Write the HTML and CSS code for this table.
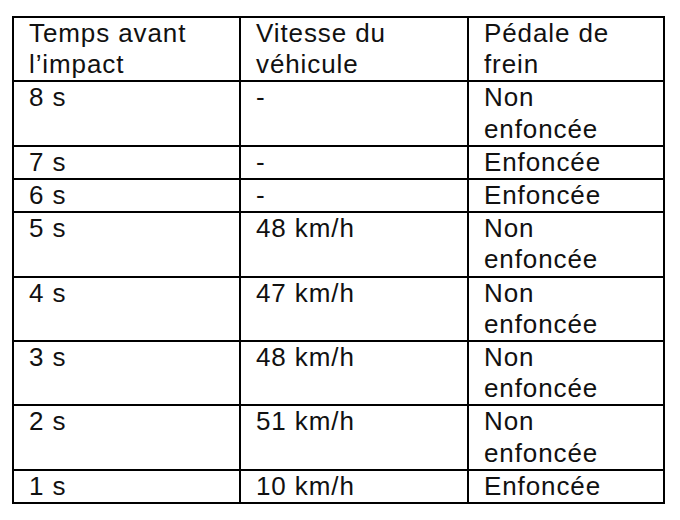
FILE: index.html
```html
<!DOCTYPE html>
<html lang="fr">
<head>
<meta charset="utf-8">
<title>Tableau</title>
<link rel="stylesheet" href="styles.css">
</head>
<body>
<table class="data">
  <colgroup>
    <col class="c1">
    <col class="c2">
    <col class="c3">
  </colgroup>
  <tr><td>Temps avant<br>l’impact</td><td>Vitesse du<br>véhicule</td><td>Pédale de<br>frein</td></tr>
  <tr><td>8 s</td><td>-</td><td>Non<br>enfoncée</td></tr>
  <tr><td>7 s</td><td>-</td><td>Enfoncée</td></tr>
  <tr><td>6 s</td><td>-</td><td>Enfoncée</td></tr>
  <tr><td>5 s</td><td>48 km/h</td><td>Non<br>enfoncée</td></tr>
  <tr><td>4 s</td><td>47 km/h</td><td>Non<br>enfoncée</td></tr>
  <tr><td>3 s</td><td>48 km/h</td><td>Non<br>enfoncée</td></tr>
  <tr><td>2 s</td><td>51 km/h</td><td>Non<br>enfoncée</td></tr>
  <tr><td>1 s</td><td>10 km/h</td><td>Enfoncée</td></tr>
</table>
</body>
</html>
```
FILE: styles.css
```css
html, body {
  margin: 0;
  padding: 0;
  background: #ffffff;
}
body {
  padding: 16px 0 0 12px;
}
.data {
  border-collapse: collapse;
  table-layout: fixed;
  width: 651px;
  font-family: "Liberation Sans", Arial, sans-serif;
  font-size: 26px;
  line-height: 31.2px;
  letter-spacing: 0.9px;
  color: #111111;
}
.data .c1 { width: 227px; }
.data .c2 { width: 228px; }
.data .c3 { width: 196px; }
.data td {
  border: 2px solid #000000;
  padding: 0 4px 0 15px;
  vertical-align: top;
  text-align: left;
}
```
